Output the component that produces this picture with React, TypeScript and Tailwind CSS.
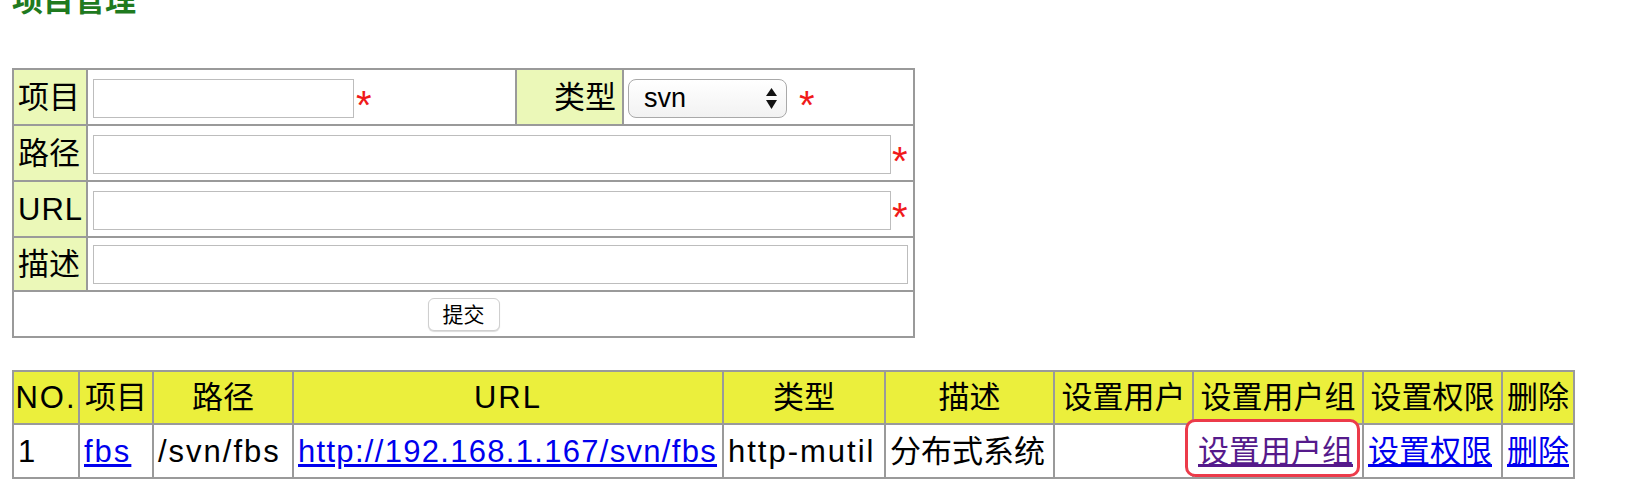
const labelCell = "flex items-center bg-[#ebf8b8] pl-[4px]";
const headCell = "flex items-center justify-center bg-[#ebef3c]";
const dataCell = "flex items-center bg-white pl-[4px]";
const linkCls = "text-[#0000ee] underline";

function Star({ className = "" }: { className?: string }) {
  return (
    <span className={"self-start mt-[12px] text-[40px] leading-none text-[#f01a1a] font-['Liberation_Sans',sans-serif] " + className}>
      *
    </span>
  );
}

function SelectArrows() {
  return (
    <svg className="pointer-events-none absolute right-[10px] top-[9px]" width="11" height="21" viewBox="0 0 11 21">
      <path d="M5.5 0 L11 8 L0 8 Z" fill="#111" />
      <path d="M0 12 L11 12 L5.5 21 Z" fill="#111" />
    </svg>
  );
}

function ProjectForm() {
  return (
    <form className="ml-[12px] mt-[52px] grid w-[903px] grid-cols-[72px_427px_105px_289px] grid-rows-[54px_54px_54px_52px_44px] gap-[2px] border-2 border-[#9a9a9a] bg-[#9a9a9a] text-[31px] leading-none">
      <div className={labelCell}>项目</div>
      <div className="flex items-center bg-white pl-[5px] pt-[3px]">
        <input className="h-[39px] w-[261px] border border-[#bdbdbd] bg-white" />
        <Star className="ml-[2px]" />
      </div>
      <div className="flex items-center justify-end bg-[#ebf8b8] pr-[6px]">类型</div>
      <div className="flex items-center bg-white pl-[4px] pt-[3px]">
        <div className="relative">
          <select className="h-[39px] w-[159px] appearance-none rounded-[8px] border border-[#a9a9a9] bg-linear-to-b from-white to-[#f2f2f2] pl-[15px] text-[27px]">
            <option>svn</option>
            <option>git</option>
          </select>
          <SelectArrows />
        </div>
        <Star className="ml-[12px]" />
      </div>

      <div className={labelCell}>路径</div>
      <div className="col-span-3 flex items-center bg-white pl-[5px] pt-[3px]">
        <input className="h-[39px] w-[798px] border border-[#bdbdbd] bg-white" />
        <Star className="ml-[1px]" />
      </div>

      <div className={labelCell + " tracking-[1px]"}>URL</div>
      <div className="col-span-3 flex items-center bg-white pl-[5px] pt-[3px]">
        <input className="h-[39px] w-[798px] border border-[#bdbdbd] bg-white" />
        <Star className="ml-[1px]" />
      </div>

      <div className={labelCell}>描述</div>
      <div className="col-span-3 flex items-center bg-white pl-[5px]">
        <input className="h-[39px] w-[815px] border border-[#bdbdbd] bg-white" />
      </div>

      <div className="col-span-4 flex items-center justify-center bg-white">
        <button
          type="button"
          className="h-[33px] w-[72px] rounded-[6px] border border-[#cfcfcf] bg-white text-[21px] shadow-[0_1px_1px_rgba(0,0,0,0.15)]"
        >
          提交
        </button>
      </div>
    </form>
  );
}

function ProjectTable() {
  return (
    <div className="ml-[12px] mt-[32px] grid w-[1563px] grid-cols-[64px_72px_138px_428px_160px_167px_137px_168px_137px_70px] grid-rows-[51px_52px] gap-[2px] border-2 border-[#9a9a9a] bg-[#9a9a9a] text-[31px] leading-none">
      <div className={headCell + " tracking-[2px]"}>NO.</div>
      <div className={headCell}>项目</div>
      <div className={headCell}>路径</div>
      <div className={headCell + " tracking-[2px]"}>URL</div>
      <div className={headCell}>类型</div>
      <div className={headCell}>描述</div>
      <div className={headCell}>设置用户</div>
      <div className={headCell}>设置用户组</div>
      <div className={headCell}>设置权限</div>
      <div className={headCell}>删除</div>

      <div className={dataCell + " tracking-[2px]"}>1</div>
      <div className={dataCell + " tracking-[2px]"}>
        <a href="#" className={linkCls}>fbs</a>
      </div>
      <div className={dataCell + " tracking-[2px]"}>/svn/fbs</div>
      <div className={dataCell + " tracking-[1.3px]"}>
        <a href="#" className={linkCls}>http://192.168.1.167/svn/fbs</a>
      </div>
      <div className={dataCell + " tracking-[2px]"}>http-mutil</div>
      <div className={dataCell}>分布式系统</div>
      <div className={dataCell}></div>
      <div className={dataCell + " relative"}>
        <div className="absolute -left-[9px] -top-[6px] right-[2px] bottom-0 rounded-[10px] border-[3px] border-[#ec3b4a] bg-white" />
        <a href="#" className="relative text-[#551a8b] underline">设置用户组</a>
      </div>
      <div className={dataCell}>
        <a href="#" className={linkCls}>设置权限</a>
      </div>
      <div className={dataCell}>
        <a href="#" className={linkCls}>删除</a>
      </div>
    </div>
  );
}

export default function App() {
  return (
    <div className="min-h-screen overflow-hidden bg-white text-black font-['Liberation_Sans','Noto_Sans_CJK_SC',sans-serif]">
      <h1 className="-mt-[15px] ml-[12px] h-[31px] text-[31px] font-bold leading-[31px] text-[#1f7a1f]">项目管理</h1>
      <ProjectForm />
      <ProjectTable />
    </div>
  );
}
